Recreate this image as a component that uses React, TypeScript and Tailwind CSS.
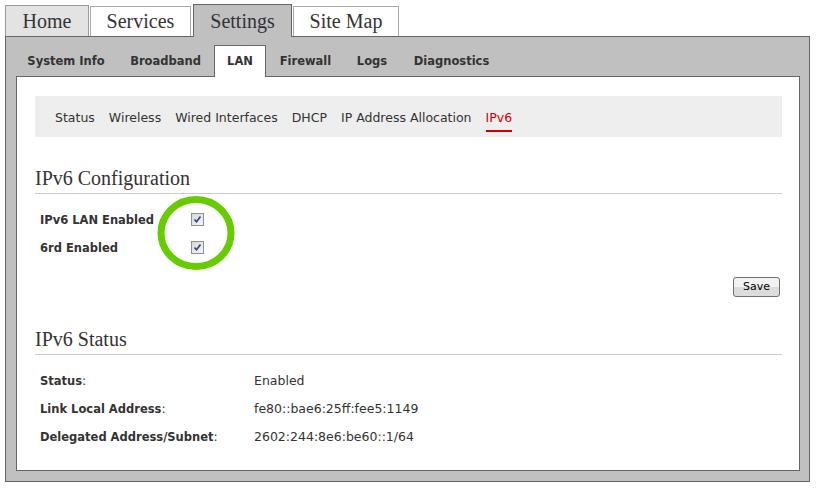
const sans = "font-['DejaVu_Sans',sans-serif]";
const serif = "font-['Liberation_Serif',serif]";

const lanNav = ["Status", "Wireless", "Wired Interfaces", "DHCP", "IP Address Allocation", "IPv6"];

const statusRows = [
  { label: "Status", value: "Enabled" },
  { label: "Link Local Address", value: "fe80::bae6:25ff:fee5:1149" },
  { label: "Delegated Address/Subnet", value: "2602:244:8e6:be60::1/64" },
];

function CheckBox() {
  return (
    <span className="flex h-[13px] w-[13px] items-center justify-center border border-[#8e8f8f] bg-gradient-to-br from-[#d8d8d8] to-[#f7f7f7]">
      <svg width="9" height="9" viewBox="0 0 9 9">
        <path d="M1.5 4.5 L3.5 6.8 L7.5 1.5" fill="none" stroke="#2b3f91" strokeWidth={1.6} />
      </svg>
    </span>
  );
}

export default function App() {
  return (
    <div className={`h-[488px] w-[816px] bg-white text-[#333] ${sans}`}>
      {/* main tabs */}
      <div className={`flex items-end pl-[5px] pt-[4px] text-[20px] leading-[24px] ${serif}`}>
        <div className="h-[31px] w-[84px] border border-b-0 border-[#999] bg-[#e3e3e3] pt-[3px] text-center">Home</div>
        <div className="ml-[1px] h-[30px] w-[101px] border border-b-0 border-[#aaa] bg-white pt-[2px] text-center">Services</div>
        <div className="relative z-10 -mb-px ml-[2px] h-[33px] w-[99px] border border-b-0 border-[#666] bg-[#c0c0c0] pt-[4px] text-center">Settings</div>
        <div className="ml-[1px] h-[30px] w-[106px] border border-b-0 border-[#aaa] bg-white pt-[2px] text-center">Site Map</div>
      </div>

      <div className="ml-[5px] h-[446px] w-[805px] border border-[#666] bg-[#c0c0c0]">
        {/* settings sub tabs */}
        <div className="flex pl-[9px] pt-[8px] text-[11.5px] font-bold leading-[16px] text-[#333]">
          <div className="h-[31px] w-[102px] pt-[8px] text-center">System Info</div>
          <div className="h-[31px] w-[97px] pt-[8px] text-center">Broadband</div>
          <div className="relative z-10 -mb-px h-[32px] w-[52px] border border-b-0 border-[#666] bg-white pt-[7px] text-center">LAN</div>
          <div className="h-[31px] w-[79px] pt-[8px] text-center">Firewall</div>
          <div className="h-[31px] w-[54px] pt-[8px] text-center">Logs</div>
          <div className="h-[31px] w-[105px] pt-[8px] text-center">Diagnostics</div>
        </div>

        <div className="ml-[10px] mr-[9px] h-[395px] border border-[#666] bg-white pl-[18px] pr-[17px] pt-[19px]">
          <div className="flex h-[41px] items-start gap-[14px] bg-[#eeeeee] pl-[20px] pt-[13px] text-[12.5px] leading-[17px]">
            {lanNav.map((item) =>
              item === "IPv6" ? (
                <span key={item} className="border-b-2 border-[#cc0000] pb-[4px] text-[#cc0000]">
                  {item}
                </span>
              ) : (
                <span key={item}>{item}</span>
              )
            )}
          </div>

          <div className={`mt-[29px] border-b border-[#ccc] pb-[3px] text-[20px] leading-[24px] ${serif}`}>IPv6 Configuration</div>

          <div className="relative mt-[11px]">
            <div className="flex h-[28px] items-center pl-[5px]">
              <span className="w-[151px] pt-[3px] text-[11.5px] font-bold">IPv6 LAN Enabled</span>
              <CheckBox />
            </div>
            <div className="flex h-[28px] items-center pl-[5px]">
              <span className="w-[151px] pt-[3px] text-[11.5px] font-bold">6rd Enabled</span>
              <CheckBox />
            </div>
            {/* highlight ring */}
            <svg className="absolute left-[118px] top-[-9px]" width="86" height="80" viewBox="0 0 86 80">
              <ellipse cx="43" cy="37" rx="35" ry="33.5" fill="none" stroke="#66cc00" strokeWidth={7} />
            </svg>
          </div>

          <div className="mt-[16px] flex justify-end pr-[2px]">
            <button className="h-[20px] w-[47px] rounded-[3px] border border-[#707070] bg-gradient-to-b from-[#f2f2f2] from-50% to-[#dcdcdc] to-50% text-[11px] leading-[18px] text-black">
              Save
            </button>
          </div>

          <div className={`mt-[30px] border-b border-[#ccc] pb-[3px] text-[20px] leading-[24px] ${serif}`}>IPv6 Status</div>

          <div className="mt-[11px]">
            {statusRows.map((row) => (
              <div key={row.label} className="flex h-[28px] items-center pl-[5px] pt-[2px] text-[12.5px]">
                <span className="w-[214px]">
                  <span className="text-[11.5px] font-bold">{row.label}</span>:
                </span>
                <span>{row.value}</span>
              </div>
            ))}
          </div>
        </div>
      </div>
    </div>
  );
}
